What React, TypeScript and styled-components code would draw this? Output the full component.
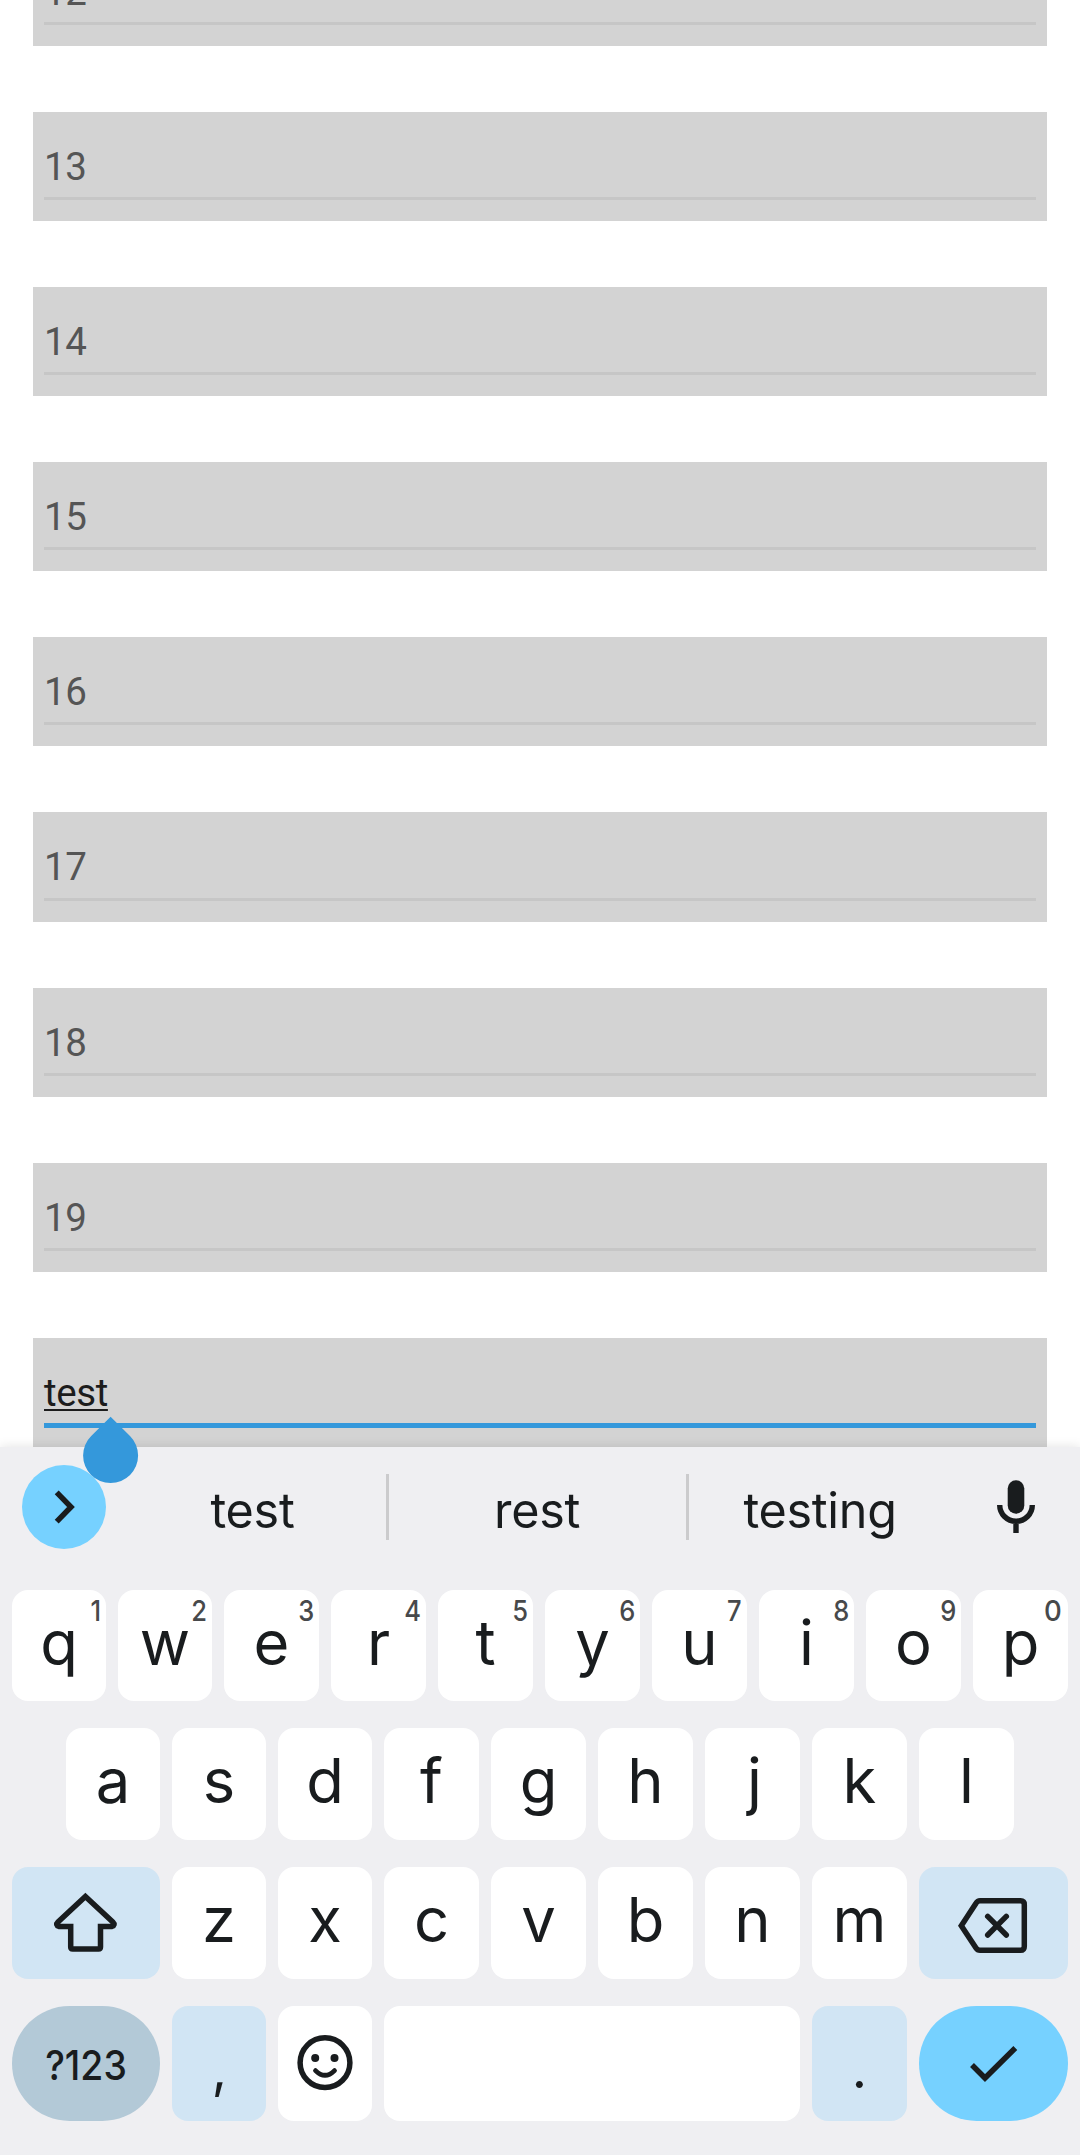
import React from 'react';
import styled, { createGlobalStyle } from 'styled-components';

const ink = '#191c1e';

const Global = createGlobalStyle`
  *, *::before, *::after { box-sizing: border-box; }
  body { margin: 0; background: #fff; font-family: Roboto, "Noto Sans", sans-serif; }
`;

const Screen = styled.div`
  width: 1080px;
  height: 2155px;
  overflow: hidden;
  display: flex;
  flex-direction: column;
  background: #fff;
`;

const List = styled.main`
  height: 1447px;
  flex: none;
  overflow: hidden;
  display: flex;
  flex-direction: column;
  justify-content: flex-end;
  gap: 66px;
  padding: 0 33px;
`;

const Field = styled.div<{ $focused?: boolean; $tall?: boolean }>`
  height: ${(p) => (p.$tall ? 110 : 109)}px;
  flex: none;
  display: flex;
  flex-direction: column;
  justify-content: space-between;
  padding: 32px 11px ${(p) => (p.$focused ? 19 : 21)}px;
  background: #d3d3d3;
  color: ${(p) => (p.$focused ? '#1c1c1c' : '#555')};
`;

const FieldText = styled.div<{ $focused?: boolean }>`
  height: 45px;
  font-size: 38.5px;
  line-height: 45px;
  letter-spacing: -0.4px;
  ${(p) => p.$focused && 'text-decoration: underline; text-decoration-thickness: 2px; text-underline-offset: 3px; text-decoration-skip-ink: none;'}
`;

const FieldLine = styled.div<{ $focused?: boolean }>`
  height: ${(p) => (p.$focused ? 5 : 3)}px;
  background: ${(p) => (p.$focused ? '#3498db' : '#c6c6c6')};
`;

const Keyboard = styled.section`
  position: relative;
  flex: none;
  height: 708px;
  padding: 0 12px;
  display: flex;
  flex-direction: column;
  background: #efeff2;
  box-shadow: 0 -1px 10px rgba(0, 0, 0, 0.1);
  color: ${ink};
  font-family: Inter, Roboto, sans-serif;
`;

const Handle = styled.svg`
  position: absolute;
  left: 82px;
  top: -31px;
  width: 57px;
  height: 70px;
`;

const Strip = styled.div`
  height: 143px;
  flex: none;
  display: flex;
  align-items: flex-start;
  padding: 18px 10px 0;
`;

const Expand = styled.div`
  width: 84px;
  height: 84px;
  border-radius: 50%;
  background: #76d1ff;
  margin-right: 14px;
`;

const Suggestion = styled.div<{ $w: number }>`
  width: ${(p) => p.$w}px;
  padding: 20px 1px 0 0;
  text-align: center;
  font-size: 48.5px;
  line-height: 51px;
  font-weight: 380;
  letter-spacing: -0.3px;
`;

const Divider = styled.div`
  width: 3px;
  height: 66px;
  margin-top: 9px;
  background: #cbcbcd;
`;

const Mic = styled.svg`
  width: 40px;
  height: 56px;
  margin: 14px 0 0 44px;
`;

const Row = styled.div<{ $h: number; $indent?: number }>`
  height: ${(p) => p.$h}px;
  flex: none;
  display: flex;
  gap: 12px;
  margin-bottom: 27px;
  padding-left: ${(p) => p.$indent ?? 0}px;
`;

const tones = { plain: '#fff', soft: '#d1e5f4', dim: '#b3c9d7', accent: '#76d1ff' };

const Key = styled.div<{ $w: number; $tone?: keyof typeof tones; $pill?: boolean }>`
  position: relative;
  width: ${(p) => p.$w}px;
  flex: none;
  border-radius: ${(p) => (p.$pill ? 57.5 : 16)}px;
  background: ${(p) => tones[p.$tone ?? 'plain']};
  text-align: center;
`;

const Letter = styled.div<{ $top: number; $size?: number; $nudge?: number }>`
  padding-top: ${(p) => p.$top}px;
  padding-left: ${(p) => p.$nudge ?? 0}px;
  font-size: ${(p) => p.$size ?? 61.5}px;
  line-height: 62px;
  font-weight: 390;
`;

const Mode = styled.div`
  padding-top: 38px;
  font-size: 41.5px;
  line-height: 42px;
  font-weight: 500;
  transform: scaleX(0.9);
`;

const Hint = styled.div<{ $round?: boolean }>`
  position: absolute;
  top: 5px;
  right: ${(p) => (p.$round ? 6 : 5)}px;
  font-size: 29px;
  line-height: 31px;
  font-weight: 520;
  color: #47494b;
  transform: scaleX(${(p) => (p.$round ? 0.95 : 0.88)});
  transform-origin: right;
`;

const Icon = styled.svg`
  display: block;
  fill: none;
  stroke: ${ink};
  stroke-width: 5.5;
`;

const fields = ['12', '13', '14', '15', '16', '17', '18', '19'];
const rowOne = 'qwertyuiop'.split('');
const rowTwo = 'asdfghjkl'.split('');
const rowThree = 'zxcvbnm'.split('');

export default function App() {
  return (
    <>
      <Global />
      <Screen>
        <List>
          {fields.map((f) => (
            <Field key={f} $tall={f === '17'}>
              <FieldText>{f}</FieldText>
              <FieldLine />
            </Field>
          ))}
          <Field $focused>
            <FieldText $focused>test</FieldText>
            <FieldLine $focused />
          </Field>
        </List>
        <Keyboard>
          <Strip>
            <Expand>
              <Icon width="84" height="84" viewBox="0 0 84 84">
                <path d="M34.7 27.3 49 42 34.7 56.7" />
              </Icon>
            </Expand>
            <Suggestion $w={266}>test</Suggestion>
            <Divider />
            <Suggestion $w={297}>rest</Suggestion>
            <Divider />
            <Suggestion $w={263}>testing</Suggestion>
            <Mic viewBox="0 0 40 56">
              <rect x="11.7" y="1.3" width="16.6" height="33.4" rx="8.3" fill={ink} />
              <path d="M3.7 26A16.3 16.3 0 0 0 36.3 26M20 42V54" fill="none" stroke={ink} strokeWidth="5.4" />
            </Mic>
          </Strip>
          <Row $h={111}>
            {rowOne.map((c, i) => (
              <Key key={c} $w={i < 2 ? 94 : 95}>
                <Letter $top={22}>{c}</Letter>
                <Hint $round={i === 9}>{(i + 1) % 10}</Hint>
              </Key>
            ))}
          </Row>
          <Row $h={112} $indent={54}>
            {rowTwo.map((c, i) => (
              <Key key={c} $w={i < 3 ? 94 : 95}>
                <Letter $top={22} $nudge={c === 'j' ? 4 : 0}>{c}</Letter>
              </Key>
            ))}
          </Row>
          <Row $h={112}>
            <Key $w={148} $tone="soft">
              <Icon width="148" height="112" viewBox="0 0 148 112">
                <path d="M58.7 59.5H47Q43 58 46 55L73.4 29.4 100.8 55Q103.8 58 99.8 59.5H88.5V80q0 2-2 2H60.7q-2 0-2-2Z" />
              </Icon>
            </Key>
            {rowThree.map((c, i) => (
              <Key key={c} $w={i < 2 ? 94 : 95}>
                <Letter $top={22}>{c}</Letter>
              </Key>
            ))}
            <Key $w={149} $tone="soft">
              <Icon width="149" height="112" viewBox="0 0 149 112">
                <path d="M42.3 58.7 57 36.2Q58.5 33.7 61 33.7H101.5Q105.3 33.7 105.3 37.5V79.5Q105.3 83.3 101.5 83.3H61Q58.5 83.3 57 81Z" />
                <path d="M68.7 49.4 87.3 68M87.3 49.4 68.7 68" strokeLinecap="round" />
              </Icon>
            </Key>
          </Row>
          <Row $h={115}>
            <Key $w={148} $tone="dim" $pill>
              <Mode>?123</Mode>
            </Key>
            <Key $w={94} $tone="soft">
              <Letter $top={32} $size={53} $nudge={1}>,</Letter>
            </Key>
            <Key $w={94}>
              <Icon width="94" height="115" viewBox="0 0 94 115">
                <circle cx="47" cy="56.7" r="24.9" />
                <circle cx="37.2" cy="52" r="4" fill={ink} stroke="none" />
                <circle cx="56.5" cy="52" r="4" fill={ink} stroke="none" />
                <path d="M37.5 64.6Q47 74 56.5 64.6" strokeWidth="4.8" strokeLinecap="round" />
              </Icon>
            </Key>
            <Key $w={416} />
            <Key $w={95} $tone="soft">
              <Letter $top={32} $size={53}>.</Letter>
            </Key>
            <Key $w={149} $tone="accent" $pill>
              <Icon width="149" height="115" viewBox="0 0 149 115">
                <path d="M53 59 66 72 96.3 42" />
              </Icon>
            </Key>
          </Row>
          <Handle viewBox="0 0 57 70">
            <path d="M28.6 .8 48 20A27.5 27.5 0 1 1 9.2 20Z" fill="#3498db" />
          </Handle>
        </Keyboard>
      </Screen>
    </>
  );
}
